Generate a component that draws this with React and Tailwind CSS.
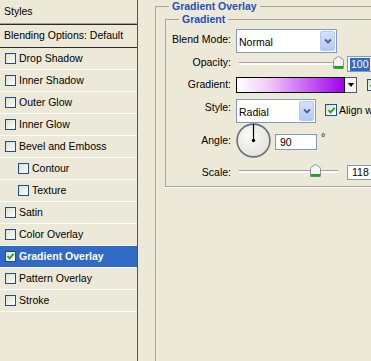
import React from "react";

const styleItems = [
  { label: "Drop Shadow" },
  { label: "Inner Shadow" },
  { label: "Outer Glow" },
  { label: "Inner Glow" },
  { label: "Bevel and Emboss" },
  { label: "Contour", sub: true },
  { label: "Texture", sub: true },
  { label: "Satin" },
  { label: "Color Overlay" },
  { label: "Gradient Overlay", active: true },
  { label: "Pattern Overlay" },
  { label: "Stroke" },
];

/* ---------- XP bits ---------- */
const CheckBox = ({ checked = false, className = "" }) => (
  <span
    className={
      "shrink-0 w-[11px] h-[11px] border border-[#1c5180] bg-[linear-gradient(135deg,#dcdcd7,#ffffff)] flex items-center justify-center " +
      className
    }
  >
    {checked && (
      <svg width="9" height="9" viewBox="0 0 9 9">
        <path d="M1.5 4.2 L3.6 6.4 L7.6 1.8" stroke="#21a121" strokeWidth="1.9" fill="none" />
      </svg>
    )}
  </span>
);

const ComboButton = () => (
  <span className="shrink-0 w-[15px] h-[20px] rounded-[2px] border border-[#b7c9f4] bg-[linear-gradient(180deg,#d4e1fd,#b3c8f6)] flex items-center justify-center">
    <svg width="8" height="6" viewBox="0 0 8 6">
      <path d="M1 1.5 L4 4.5 L7 1.5" stroke="#4d6185" strokeWidth="1.8" fill="none" />
    </svg>
  </span>
);

const Select = ({ value, className = "" }) => (
  <div className={"h-[24px] bg-white border border-[#7f9db9] flex items-center justify-between pl-[2px] pr-px " + className}>
    <span className="leading-[13px] mt-[2px]">{value}</span>
    <ComboButton />
  </div>
);

const Thumb = () => (
  <svg width="11" height="13" viewBox="0 0 11 13">
    <path d="M0.5 4.5 Q0.5 3.8 1.2 3.3 L4.8 0.8 Q5.5 0.3 6.2 0.8 L9.8 3.3 Q10.5 3.8 10.5 4.5 V12.5 H0.5 Z" fill="#f4f4f0" stroke="#8d939c" />
    <rect x="1" y="10" width="9" height="2.5" fill="#21a121" />
  </svg>
);

const Slider = ({ pos, trackEnd }) => (
  <div className="relative w-[111px] h-[17px] shrink-0">
    <div
      className="absolute left-[3px] top-[7px] h-[3px] border-t border-[#a3a39b] border-b border-b-white bg-[#f6f6f2]"
      style={{ width: trackEnd }}
    />
    <div className="absolute top-[1px]" style={{ left: pos }}>
      <Thumb />
    </div>
  </div>
);

const Label = ({ children, className = "" }) => (
  <span className={"w-[65px] shrink-0 text-right leading-[13px] " + className}>{children}</span>
);

export default function App() {
  return (
    <div className="w-[371px] h-[361px] overflow-hidden bg-[#ece9d8] flex font-['Liberation_Sans',Arial,sans-serif] text-[10.5px] text-black">
      {/* Styles list */}
      <div className="w-[138px] shrink-0 border-r border-[#55554f] flex flex-col">
        <div className="h-[23px] pl-[4px] flex items-center">Styles</div>
        <div className="h-px bg-[#a3a29a]" />
        <div className="h-px bg-[#2b2b2b]" />
        <div className="h-[23px] pl-[4px] flex items-center border-b border-[#2b2b2b]">Blending Options: Default</div>
        {styleItems.map((it) => (
          <div
            key={it.label}
            className={[
              "h-[22px] border-b border-white flex items-center gap-[3px]",
              it.sub ? "pl-[18px]" : "pl-[5px]",
              it.active ? "bg-[#316ac5] text-white font-bold" : "",
            ].join(" ")}
          >
            <CheckBox checked={it.active} />
            <span className="leading-[13px]">{it.label}</span>
          </div>
        ))}
      </div>

      {/* Options */}
      <div className="flex-1 min-w-0 pl-[17px]">
        <fieldset className="w-[420px] h-[420px] border border-[#a8a79c] shadow-[1px_1px_0_#fff]">
          <legend className="ml-[13px] px-[3px] leading-[13px] font-bold text-[#1f4fc1]">Gradient Overlay</legend>

          <fieldset className="ml-[9px] w-[400px] border border-[#a8a79c] shadow-[0_1px_0_#fff] pb-[6px]">
            <legend className="ml-[13px] px-[3px] leading-[13px] font-bold text-[#1f4fc1]">Gradient</legend>

            {/* Blend Mode */}
            <div className="mt-[3px] h-[24px] flex items-start">
              <Label className="pt-[4px]">Blend Mode:</Label>
              <Select value="Normal" className="ml-[5px] w-[101px]" />
            </div>

            {/* Opacity */}
            <div className="mt-[2px] h-[17px] flex items-start">
              <Label className="pt-[1px]">Opacity:</Label>
              <div className="ml-[5px] flex items-start">
                <Slider pos={97} trackEnd={96} />
                <div className="mt-[1px] w-[30px] h-[16px] bg-white border border-[#7f9db9] flex items-center pl-[2px]">
                  <span className="bg-[#316ac5] text-white leading-[13px] px-px">100</span>
                </div>
              </div>
            </div>

            {/* Gradient */}
            <div className="mt-[5px] h-[16px] flex items-start">
              <Label className="pt-px">Gradient:</Label>
              <div className="ml-[5px] flex items-start">
                <div className="w-[109px] h-[16px] border border-black bg-[linear-gradient(to_right,#ffffff,#f0c8f8_30%,#a000ee)]" />
                <div className="w-[12px] h-[16px] border border-l-0 border-[#555] bg-[#f3f3f0] flex items-center justify-center">
                  <svg width="6" height="4" viewBox="0 0 6 4">
                    <path d="M0 0 H6 L3 4 Z" fill="#000" />
                  </svg>
                </div>
                <CheckBox checked className="ml-[10px] mt-[2px] w-[12px] h-[12px]" />
              </div>
            </div>

            {/* Style */}
            <div className="mt-[6px] h-[24px] flex items-start">
              <Label className="pt-[2px]">Style:</Label>
              <Select value="Radial" className="ml-[5px] w-[80px]" />
              <CheckBox checked className="ml-[9px] mt-[5px] w-[12px] h-[12px]" />
              <span className="ml-[2px] mt-[5px] leading-[13px] whitespace-nowrap">Align with Layer</span>
            </div>

            {/* Angle */}
            <div className="h-[35px] flex items-start">
              <Label className="pt-[11px]">Angle:</Label>
              <svg className="ml-[5px] shrink-0" width="35" height="35" viewBox="0 0 35 35">
                <defs>
                  <radialGradient id="dial" cx="0.4" cy="0.35" r="0.7">
                    <stop offset="0" stopColor="#fbfbf8" />
                    <stop offset="1" stopColor="#e2e1da" />
                  </radialGradient>
                </defs>
                <circle cx="17.5" cy="17.5" r="16.4" fill="url(#dial)" stroke="#6a707c" strokeWidth="1.6" />
                <line x1="17.5" y1="17.5" x2="17.5" y2="1" stroke="#000" strokeWidth="1.2" />
                <circle cx="17.5" cy="17.5" r="1.7" fill="#000" />
              </svg>
              <div className="ml-[4px] mt-[11px] w-[42px] h-[16px] bg-white border border-[#7f9db9] flex items-center pl-[4px]">
                <span className="leading-[13px]">90</span>
              </div>
              <span className="ml-[4px] mt-[8px] leading-[13px]">°</span>
            </div>

            {/* Scale */}
            <div className="mt-[5px] h-[17px] flex items-start">
              <Label className="pt-[3px]">Scale:</Label>
              <div className="ml-[5px] flex items-start">
                <Slider pos={74} trackEnd={99} />
                <div className="mt-[2px] w-[30px] h-[15px] bg-white border border-[#7f9db9] flex items-center pl-[4px]">
                  <span className="leading-[13px]">118</span>
                </div>
              </div>
            </div>
          </fieldset>
        </fieldset>
      </div>
    </div>
  );
}
